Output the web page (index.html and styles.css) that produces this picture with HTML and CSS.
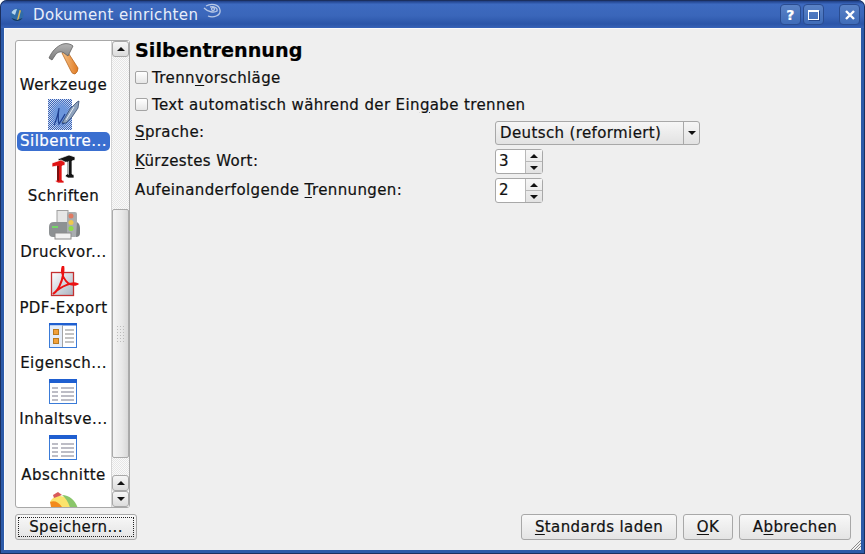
FILE: index.html
```html
<!DOCTYPE html>
<html lang="de">
<head>
  <meta charset="UTF-8">
  <title>Dokument einrichten</title>
  <link rel="stylesheet" href="styles.css">
</head>
<body>

  <div class="fenster">
    <div class="titelleiste">
      <svg class="app-icon" width="16" height="16" viewBox="0 0 16 16">
        <circle cx="8" cy="8" r="6.500" fill="#2f6ca8"/>
        <path d="M2.500 6 A6 6 0 0 1 8 2 L6 8 Z" fill="#b4d4ee"/>
        <path d="M8 13 L10.500 3 L12 3.500 L9.500 13 Z" fill="#d8b85a"/>
        <path d="M2.500 11 A6.500 6.500 0 0 0 13.500 11 L8 13 Z" fill="#17365f"/>
      </svg>
      <span class="titel">Dokument einrichten</span>
      <svg class="titel-deko" width="22" height="18" viewBox="0 0 22 18" fill="none" stroke="#b8c8e6" stroke-width="1.300">
        <path d="M4 3 C9 0 17 1 18 7 C19 13 11 15 6 13"/>
        <path d="M2 5 C6 9 12 10 15 8 C16 5 12 3 8 4"/>
        <circle cx="11" cy="6" r="1.500"/>
      </svg>
      <div class="titel-knoepfe">
        <span class="titel-knopf">?</span>
        <span class="titel-knopf"><i class="max-icon"></i></span>
        <span class="titel-knopf abstand">
          <svg width="12" height="12" viewBox="0 0 12 12" stroke="#fff" stroke-width="2.400"><path d="M2 2 L10 10 M10 2 L2 10"/></svg>
        </span>
      </div>
    </div>

    <div class="inhalt">
      <div class="oben">
        <div class="seitenliste">
          <div class="eintraege">
            <div class="eintrag">
              <svg width="32" height="32" viewBox="0 0 32 32">
                <defs>
                  <linearGradient id="stiel" x1="0" y1="0" x2="1" y2="0">
                    <stop offset="0" stop-color="#f6c48a"/>
                    <stop offset="1" stop-color="#e07a22"/>
                  </linearGradient>
                  <linearGradient id="kopf" x1="0" y1="0" x2="0" y2="1">
                    <stop offset="0" stop-color="#b4b4b4"/>
                    <stop offset="1" stop-color="#7c7c7c"/>
                  </linearGradient>
                  <pattern id="raster" width="2" height="2" patternUnits="userSpaceOnUse">
                    <rect width="2" height="2" fill="#cfdcf4"/>
                    <rect width="1" height="1" fill="#3a62b4"/>
                    <rect x="1" y="1" width="1" height="1" fill="#3a62b4"/>
                  </pattern>
                  <radialGradient id="mitte" cx="0.550" cy="0.500" r="0.500">
                    <stop offset="0.500" stop-color="#6c96dc"/>
                    <stop offset="1" stop-color="#6c96dc" stop-opacity="0"/>
                  </radialGradient>
                  <linearGradient id="pdfgrund" x1="0" y1="0" x2="1" y2="1">
                    <stop offset="0" stop-color="#fff"/>
                    <stop offset="1" stop-color="#a9b3c0"/>
                  </linearGradient>
                </defs>
                <path d="M14 10 L19 8 L30 25 Q30 29 27 31 Q24 31 23 28 Z" fill="url(#stiel)" stroke="#b8661e" stroke-width="0.800"/>
                <path d="M1 15 C4 8 9 3 15 1 C19 0 23 1 25 3 L20 13 L16 10 C13 8 10 9 8 11 L4 17 Z" fill="url(#kopf)" stroke="#5f5f5f" stroke-width="0.800"/>
              </svg>
              <span class="name">Werkzeuge</span>
            </div>
            <div class="eintrag aktiv">
              <svg width="32" height="32" viewBox="0 0 32 32">
                <rect x="0" y="0" width="24" height="31" fill="url(#raster)"/>
                <rect x="0" y="0" width="24" height="31" fill="url(#mitte)"/>
                <path d="M6 26 C9 20 10 15 11 9 C10 16 10 21 11 25 C14 20 15 19 17 15 M14 25 L19 23" fill="none" stroke="#1f3f90" stroke-width="1.200"/>
                <path d="M14 24 L22 10 L29 3 L31 2 L30 9 L24 18 L18 24 Z" fill="#8ea2bc" stroke="#33496e" stroke-width="0.800"/>
                <path d="M18 21 L26 8" stroke="#e8eef6" stroke-width="1"/>
              </svg>
              <span class="name">Silbentre...</span>
            </div>
            <div class="eintrag">
              <svg width="32" height="32" viewBox="0 0 32 32">
                <path d="M10 5 L21 1 L27 3 L27 6 L24 7 L24 20 L26 21 L26 24 L20 24 L17 22 L19 20 L19 8 L11 9 Z" fill="#141414" stroke="#fff" stroke-width="0.700"/>
                <path d="M19 8 L19 20 L21 21 L21 7 Z" fill="#b0b0b0"/>
                <path d="M4 9 L13 6 L17 8 L17 11 L14 12 L14 26 L16 27 L16 29 L10 29 L7 27 L9 26 L9 12 L4 13 Z" fill="#e01414" stroke="#fff" stroke-width="0.700"/>
                <path d="M9 12 L9 26 L11 27 L11 12 Z" fill="#7a1010"/>
              </svg>
              <span class="name">Schriften</span>
            </div>
            <div class="eintrag">
              <svg width="32" height="32" viewBox="0 0 32 32">
                <rect x="9" y="0.500" width="11" height="13" fill="#e6e6e6" stroke="#a0a0a0"/>
                <path d="M1 17 Q1 12 6 12 L20 12 L20 27 L5 27 Q1 27 1 23 Z" fill="#8d9193"/>
                <rect x="19" y="2" width="10" height="25" rx="2" fill="#a9adaf"/>
                <path d="M29 12 Q32 14 32 18 L32 23 Q32 27 28 27 Z" fill="#7d8183"/>
                <rect x="7" y="23" width="16" height="6" fill="#f2f2f2" stroke="#8c8c8c"/>
                <circle cx="23" cy="6" r="2.500" fill="#e07a62"/>
                <circle cx="23" cy="12.500" r="2.500" fill="#efc84c"/>
                <circle cx="23" cy="18.500" r="2.500" fill="#8edc48"/>
                <rect x="4" y="16" width="6" height="2" fill="#74d868"/>
              </svg>
              <span class="name">Druckvor...</span>
            </div>
            <div class="eintrag">
              <svg width="32" height="32" viewBox="0 0 32 32">
                <rect x="3.500" y="6.500" width="22" height="23" fill="url(#pdfgrund)" stroke="#c43030" stroke-width="1.300"/>
                <path d="M5 28 C10 25 14 16 15 9 C15.500 4 16 1 15 0 C13 4 14 10 18 15 C20 18 25 20 29 18 C25 16 14 19 5 28 Z" fill="none" stroke="#ec1212" stroke-width="2"/>
              </svg>
              <span class="name">PDF-Export</span>
            </div>
            <div class="eintrag">
              <svg width="32" height="32" viewBox="0 0 32 32">
                <rect x="1.500" y="2.500" width="27" height="24" fill="#fff" stroke="#3a7bd8"/>
                <rect x="1" y="2" width="28" height="2.500" fill="#1f5fd0"/>
                <rect x="2" y="4.500" width="12" height="21.500" fill="#e4edfa"/>
                <path d="M14.500 4.500 V26" stroke="#a4a4a4"/>
                <rect x="5.500" y="8.500" width="5" height="5" fill="#f2a13a" stroke="#b87a20"/>
                <rect x="5.500" y="17.500" width="5" height="5" fill="#f2a13a" stroke="#b87a20"/>
                <path d="M17 9 H26 M17 13 H26 M17 17 H26 M17 21 H26" stroke="#888" stroke-width="1.200"/>
              </svg>
              <span class="name">Eigensch...</span>
            </div>
            <div class="eintrag">
              <svg width="32" height="32" viewBox="0 0 32 32">
                <rect x="1.500" y="2.500" width="27" height="24" fill="#fff" stroke="#3a7bd8"/>
                <rect x="1" y="2" width="28" height="4" fill="#1f5fd0"/>
                <path d="M4 11 H10 M13 11 H26 M4 15 H10 M13 15 H26 M4 19 H10 M13 19 H26 M4 23 H10 M13 23 H26" stroke="#a8a8b4" stroke-width="1.300"/>
              </svg>
              <span class="name">Inhaltsve...</span>
            </div>
            <div class="eintrag">
              <svg width="32" height="32" viewBox="0 0 32 32">
                <rect x="1.500" y="2.500" width="27" height="24" fill="#fff" stroke="#3a7bd8"/>
                <rect x="1" y="2" width="28" height="4" fill="#1f5fd0"/>
                <path d="M4 11 H10 M13 11 H26 M4 15 H10 M13 15 H26 M4 19 H10 M13 19 H26 M4 23 H10 M13 23 H26" stroke="#a8a8b4" stroke-width="1.300"/>
              </svg>
              <span class="name">Abschnitte</span>
            </div>
            <div class="eintrag">
              <svg width="32" height="32" viewBox="0 0 32 32">
                <path d="M2 13 C8 8 14 10 20 32 L6 32 Z" fill="#f28a1c"/>
                <path d="M2 13 C6 4 20 4 30 20 L30 32 L20 32 C16 18 10 10 2 13 Z" fill="#fbe36c"/>
                <path d="M14 6 C22 6 28 12 30 20 L30 32 L24 32 C24 20 20 11 14 6 Z" fill="#8ac66a"/>
                <path d="M5 6 L10 3 L14 6 L6 9 Z" fill="#d85a5a"/>
              </svg>
            </div>
          </div>
          <div class="rollbalken">
            <span class="pfeil-knopf"><i class="pfeil hoch"></i></span>
            <div class="spur">
              <div class="griff"><i class="griffel"></i></div>
            </div>
            <span class="pfeil-knopf"><i class="pfeil hoch"></i></span>
            <span class="pfeil-knopf"><i class="pfeil runter"></i></span>
          </div>
        </div>

        <div class="seite">
          <h1>Silbentrennung</h1>
          <label class="zeile"><i class="kaestchen"></i>Trenn<u>v</u>orschläge</label>
          <label class="zeile"><i class="kaestchen"></i>Text automatisch während der Ein<u>g</u>abe trennen</label>
          <div class="formular">
            <span class="beschriftung"><u>S</u>prache:</span>
            <div class="auswahl">
              <span class="auswahl-text">Deutsch (reformiert)</span>
              <span class="auswahl-pfeil"><i class="pfeil runter"></i></span>
            </div>
            <span class="beschriftung"><u>K</u>ürzestes Wort:</span>
            <div class="zahlfeld">
              <span class="zahl">3</span>
              <span class="zahl-knoepfe"><span><i class="pfeil hoch"></i></span><span><i class="pfeil runter"></i></span></span>
            </div>
            <span class="beschriftung">Aufeinanderfolgende <u>T</u>rennungen:</span>
            <div class="zahlfeld">
              <span class="zahl">2</span>
              <span class="zahl-knoepfe"><span><i class="pfeil hoch"></i></span><span><i class="pfeil runter"></i></span></span>
            </div>
          </div>
        </div>
      </div>

      <div class="unten">
        <button class="knopf speichern"><span class="fokus">Speichern...</span></button>
        <div class="rechts">
          <button class="knopf standards"><u>S</u>tandards laden</button>
          <button class="knopf ok"><u>O</u>K</button>
          <button class="knopf abbrechen">A<u>b</u>brechen</button>
        </div>
      </div>
    </div>

    <svg class="griffecke" width="11" height="11" viewBox="0 0 11 11" stroke="#8a8a8a">
      <path d="M1 11 L11 1 M4 11 L11 4 M7 11 L11 7"/>
    </svg>
  </div>

</body>
</html>
```

FILE: styles.css
```css
html, body {
  margin: 0;
  height: 100%;
  overflow: hidden;
}
body {
  font-family: "DejaVu Sans", sans-serif;
  font-size: 15px;
  letter-spacing: 0.38px;
  color: #111;
  -webkit-text-stroke: 0.2px;
}
u {
  text-underline-offset: 2px;
}
i {
  display: block;
}
.fenster {
  position: relative;
  height: 554px;
  box-sizing: border-box;
  padding: 0 4px 4px 4px;
  display: flex;
  flex-direction: column;
  background: #2c5aa8;
  border-radius: 7px 7px 0 0;
  box-shadow: inset 0 0 0 1px #1b2f5e;
}
.griffecke {
  position: absolute;
  right: 4px;
  bottom: 4px;
}
.titelleiste {
  height: 27px;
  display: flex;
  align-items: center;
  padding-left: 4px;
  background: linear-gradient(#1f3f86, #3d6ac0 12%, #3a66ba 55%, #2b55a8 85%, #3763b8);
  margin: 1px -3px 0 -3px;
  border-radius: 6px 6px 0 0;
  color: #e8eefa;
}
.app-icon {
  margin: 0 8px 0 4px;
}
.titel {
  -webkit-text-stroke: 0;
}
.titel-deko {
  margin-left: 4px;
  margin-top: -5px;
}
.titel-knoepfe {
  margin-left: auto;
  margin-right: 4px;
  display: flex;
  gap: 2px;
}
.titel-knopf {
  width: 21px;
  height: 21px;
  box-sizing: border-box;
  display: flex;
  align-items: center;
  justify-content: center;
  background: linear-gradient(#5a82c6, #3f6cb8);
  border: 1px solid #2a4c90;
  border-radius: 4px;
  color: #fff;
  font-weight: bold;
  font-size: 14px;
}
.titel-knopf.abstand {
  margin-left: 13px;
}
.max-icon {
  width: 9px;
  height: 7px;
  border: 1px solid #fff;
  border-top-width: 2px;
  box-shadow: 1px 1px 0 #24468a;
}
.inhalt {
  flex: 1;
  min-height: 0;
  display: flex;
  flex-direction: column;
  background: #efefef;
  box-shadow: inset 0 1px 0 #fafafa, inset 1px 0 0 #fafafa;
  padding: 12px 10px 10px 11px;
}
.oben {
  flex: 1;
  min-height: 0;
  display: flex;
}
.seitenliste {
  width: 115px;
  height: 468px;
  box-sizing: border-box;
  display: flex;
  background: #fff;
  border: 1px solid #a8a8a8;
  border-radius: 3px;
  flex: none;
}
.eintraege {
  flex: 1;
  min-width: 0;
  overflow: hidden;
  padding-top: 2px;
}
.eintrag {
  height: 55.7px;
  display: flex;
  flex-direction: column;
  align-items: center;
  line-height: 17px;
  letter-spacing: 0.45px;
}
.eintrag svg {
  flex: none;
  height: 32px;
  margin-bottom: 2px;
}
.eintrag .name {
  padding: 0 3px;
}
.eintrag.aktiv .name {
  background: #3a6fd0;
  color: #fff;
  border-radius: 5px;
  line-height: 19px;
  margin-top: -1px;
}
.rollbalken {
  width: 17px;
  flex: none;
  display: flex;
  flex-direction: column;
  background: repeating-conic-gradient(#e6e6e6 0 25%, #fafafa 0 50%) 0 0 / 2px 2px;
  border-left: 1px solid #d4d4d4;
}
.spur {
  flex: 1;
  padding-top: 152px;
  padding-bottom: 17px;
  display: flex;
}
.griff {
  flex: 1;
  display: flex;
  align-items: center;
  justify-content: center;
  background: linear-gradient(90deg, #f4f4f4, #e8e8e8 60%, #d8d8d8);
  border: 1px solid #aaa;
  border-radius: 2px;
}
.griffel {
  width: 10px;
  height: 18px;
  background: radial-gradient(#bbb 40%, transparent 45%) 0 0 / 3px 3px;
}
.pfeil-knopf {
  height: 16px;
  flex: none;
  display: flex;
  align-items: center;
  justify-content: center;
  background: linear-gradient(#f6f6f6, #dcdcdc);
  border: 1px solid #a8a8a8;
  border-radius: 3px;
  box-sizing: border-box;
}
.pfeil {
  width: 0;
  height: 0;
  border-left: 4px solid transparent;
  border-right: 4px solid transparent;
}
.pfeil.hoch {
  border-bottom: 4px solid #111;
}
.pfeil.runter {
  border-top: 4px solid #111;
}
.seite {
  flex: 1;
  min-width: 0;
  padding-left: 5px;
}
h1 {
  margin: 0 0 2px 0;
  font-size: 19.2px;
  line-height: 22px;
  letter-spacing: 0;
  font-weight: bold;
  color: #000;
}
.zeile {
  height: 27px;
  display: flex;
  align-items: center;
}
.kaestchen {
  width: 11px;
  height: 11px;
  margin-right: 4px;
  background: linear-gradient(#fff, #e6e6e6);
  border: 1px solid #a4a4a4;
  border-radius: 2px;
}
.formular {
  display: grid;
  grid-template-columns: 360px auto;
  justify-content: start;
  justify-items: start;
  align-items: center;
  row-gap: 4px;
  margin-top: 3px;
}
.beschriftung {
  padding-bottom: 2px;
}
.auswahl {
  width: 205px;
  height: 24px;
  box-sizing: border-box;
  display: flex;
  background: linear-gradient(#f6f6f6, #e2e2e2);
  border: 1px solid #a8a8a8;
  border-radius: 3px;
}
.auswahl-text {
  flex: 1;
  padding-left: 4px;
  line-height: 22px;
}
.auswahl-pfeil {
  width: 15px;
  display: flex;
  align-items: center;
  justify-content: center;
  border-left: 1px solid #a8a8a8;
}
.zahlfeld {
  width: 48px;
  height: 25px;
  box-sizing: border-box;
  display: flex;
  background: #fff;
  border: 1px solid #a8a8a8;
  border-radius: 3px;
}
.zahl {
  flex: 1;
  padding-left: 3px;
  line-height: 23px;
}
.zahl-knoepfe {
  width: 16px;
  display: flex;
  flex-direction: column;
  border-left: 1px solid #b8b8b8;
  background: linear-gradient(#f6f6f6, #e2e2e2);
}
.zahl-knoepfe span {
  flex: 1;
  display: flex;
  align-items: center;
  justify-content: center;
}
.zahl-knoepfe span + span {
  border-top: 1px solid #b8b8b8;
}
.unten {
  display: flex;
  justify-content: space-between;
  align-items: center;
  flex: none;
  margin-top: 6px;
}
.rechts {
  display: flex;
  gap: 6px;
}
.knopf {
  height: 26px;
  box-sizing: border-box;
  padding: 0;
  font: inherit;
  letter-spacing: inherit;
  color: #111;
  background: linear-gradient(#f8f8f8, #e4e4e4);
  border: 1px solid #a8a8a8;
  border-radius: 3px;
}
.speichern {
  width: 122px;
  padding: 2px;
}
.fokus {
  display: block;
  height: 100%;
  line-height: 18px;
  border: 1px dotted #222;
  box-sizing: border-box;
}
.standards {
  width: 156px;
}
.ok {
  width: 50px;
}
.abbrechen {
  width: 112px;
}
```
